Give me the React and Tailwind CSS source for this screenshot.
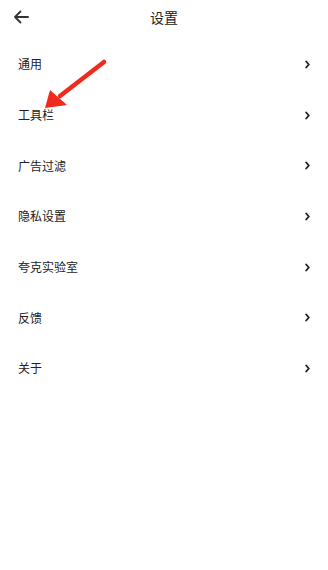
const items = ["通用", "工具栏", "广告过滤", "隐私设置", "夸克实验室", "反馈", "关于"];

function Chevron() {
  return (
    <svg width="5" height="9" viewBox="0 0 5 9" className="text-[#222]">
      <path d="M1.2 1.5 L3.8 4.5 L1.2 7.5" fill="none" stroke="currentColor" strokeWidth="1.9" strokeLinecap="round" strokeLinejoin="round" />
    </svg>
  );
}

export default function App() {
  return (
    <div
      className="relative w-[328px] h-[570px] bg-white text-[#222] overflow-hidden"
      style={{ fontFamily: '"Noto Sans CJK SC", "Noto Sans", sans-serif' }}
    >
      <div className="flex items-center h-[34px] px-[13px]">
        <svg width="16" height="14" viewBox="0 0 16 14" className="text-[#333]">
          <path d="M15 7 H2 M7.5 1.5 L2 7 L7.5 12.5" fill="none" stroke="currentColor" strokeWidth="1.8" strokeLinecap="round" strokeLinejoin="round" />
        </svg>
        <div className="flex-1 text-center text-[14px] pr-[16px] leading-none">设置</div>
      </div>
      <div className="pt-[5px]">
        {items.map((t) => (
          <div key={t} className="flex items-center justify-between h-[50.7px] pl-[18px] pr-[18px]">
            <span className="text-[12px] leading-none">{t}</span>
            <Chevron />
          </div>
        ))}
      </div>
      <svg className="absolute left-0 top-0" width="328" height="570" viewBox="0 0 328 570">
        <line x1="104" y1="62" x2="60" y2="96" stroke="#f02a1d" strokeWidth="4.5" strokeLinecap="round" />
        <polygon points="45,108 50,90 67,105" fill="#f02a1d" />
      </svg>
    </div>
  );
}
